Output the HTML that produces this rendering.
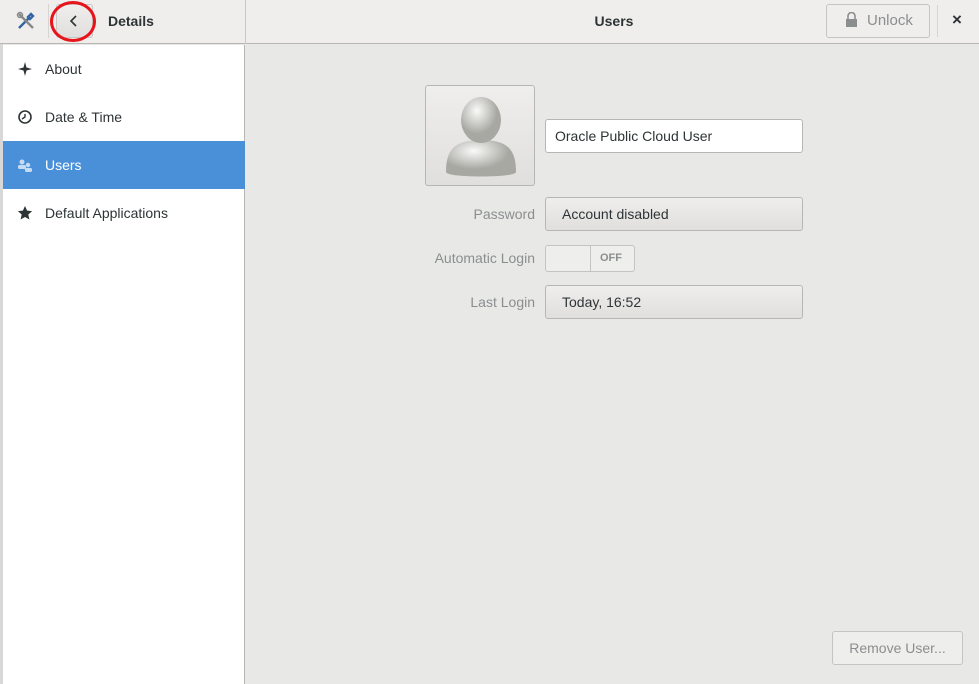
<!DOCTYPE html>
<html><head><style>
*{box-sizing:border-box;margin:0;padding:0}
body{width:979px;height:684px;overflow:hidden;font-family:"Liberation Sans","DejaVu Sans",sans-serif;font-size:14px;color:#2e3436;background:#e8e8e7;position:relative}
.abs{position:absolute}
.hdr{left:0;top:0;width:979px;height:44px;background:#efeeed;border-bottom:1px solid #b6b6b3}
.side{left:3px;top:45px;width:242px;height:639px;background:#fff;border-right:1px solid #b6b6b3}
.row{position:absolute;left:0;width:242px;height:48px;line-height:48px;padding-left:42px;font-size:14px}
.btn{border:1px solid #b6b6b3;border-radius:3px;background:linear-gradient(#efeeed,#e0dfdd);}
.lbl{color:#8b8e8f;text-align:right;width:200px;left:335px;font-size:14px}
</style></head><body>
<div class="abs" style="left:0;top:0;width:3px;height:684px;background:#d8d8d6"></div>
<div class="abs hdr"></div>
<div class="abs" style="left:245px;top:0;width:1px;height:44px;background:#c8c8c5"></div>
<div class="abs" style="left:48px;top:4px;width:1px;height:34px;background:#d5d5d2"></div>
<svg class="abs" style="left:16px;top:11px" width="20" height="20" viewBox="0 0 20 20"><path d="M3 17L13 7M15 3l2 2-3 3-2-2z" stroke="#3465a4" stroke-width="2.4" fill="none"/><path d="M3 3l14 14" stroke="#888" stroke-width="2.4"/><circle cx="4" cy="4" r="2.5" fill="none" stroke="#888" stroke-width="1.5"/></svg>
<div class="abs btn" style="left:56px;top:4px;width:37px;height:34px;border-color:#c8c8c5"></div>
<svg class="abs" style="left:68px;top:14px" width="12" height="14"><path d="M8 2L3 7l5 5" stroke="#2e3436" stroke-width="1.6" fill="none"/></svg>
<div class="abs" style="left:50px;top:1px;width:46px;height:41px;border:3px solid #e8141c;border-radius:50%"></div>
<div class="abs" style="left:108px;top:13px;font-weight:bold;font-size:14px">Details</div>
<div class="abs" style="left:246px;top:13px;width:736px;text-align:center;font-weight:bold">Users</div>
<div class="abs" style="left:826px;top:4px;width:104px;height:34px;border:1px solid #c4c4c1;border-radius:3px;background:#efeeed"></div>
<svg class="abs" style="left:845px;top:12px" width="14" height="16"><path d="M3 7V4a3.5 3.5 0 0 1 7 0v3" stroke="#8b8e8f" stroke-width="1.6" fill="none"/><rect x="1" y="7" width="11" height="8" fill="#8b8e8f"/></svg>
<div class="abs" style="left:867px;top:12px;color:#8b8e8f;font-size:15px">Unlock</div>
<div class="abs" style="left:937px;top:5px;width:1px;height:32px;background:#d5d5d2"></div>
<div class="abs" style="left:952px;top:10px;font-weight:bold;font-size:17px">×</div>
<div class="abs side">
<div class="row" style="top:0">About</div>
<div class="row" style="top:48px">Date &amp; Time</div>
<div class="row" style="top:96px;background:#4a90d9;color:#fff">Users</div>
<div class="row" style="top:144px">Default Applications</div>
</div>
<svg class="abs" style="left:17px;top:61px" width="16" height="16"><path d="M8 1L9.5 6.5 15 8 9.5 9.5 8 15 6.5 9.5 1 8 6.5 6.5z" fill="#2e3436"/></svg>
<svg class="abs" style="left:17px;top:109px" width="16" height="16"><circle cx="8" cy="8" r="6" stroke="#2e3436" stroke-width="1.6" fill="none"/><path d="M8 5v3l-3 2" stroke="#2e3436" stroke-width="1.4" fill="none"/></svg>
<svg class="abs" style="left:17px;top:157px" width="16" height="16"><circle cx="5" cy="5" r="2.5" fill="#c5dbf3"/><rect x="1" y="8" width="8" height="4" rx="1.5" fill="#c5dbf3"/><circle cx="11" cy="8" r="2.2" fill="#c5dbf3"/><rect x="8" y="11" width="7" height="4" rx="1.5" fill="#c5dbf3"/></svg>
<svg class="abs" style="left:17px;top:205px" width="16" height="16"><path d="M8 1l2.1 4.6 5 .5-3.8 3.4 1.1 5L8 12l-4.4 2.5 1.1-5L.9 6.1l5-.5z" fill="#2e3436"/></svg>
<div class="abs btn" style="left:425px;top:85px;width:110px;height:101px"></div>
<svg class="abs" style="left:440px;top:90px" width="82" height="92" viewBox="0 0 82 92"><defs><radialGradient id="g" cx="40%" cy="30%"><stop offset="0" stop-color="#fafaf8"/><stop offset="1" stop-color="#a8a8a3"/></radialGradient></defs><path d="M6 82c0-22 8-32 35-32s35 10 35 32c0 6-70 6-70 0z" fill="url(#g)"/><ellipse cx="41" cy="30" rx="20" ry="23" fill="url(#g)"/></svg>
<div class="abs" style="left:545px;top:119px;width:258px;height:34px;background:#fff;border:1px solid #b6b6b3;border-radius:3px;padding:8px 9px">Oracle Public Cloud User</div>
<div class="abs lbl" style="top:206px">Password</div>
<div class="abs btn" style="left:545px;top:197px;width:258px;height:34px;padding:8px 16px">Account disabled</div>
<div class="abs lbl" style="top:250px">Automatic Login</div>
<div class="abs" style="left:545px;top:245px;width:90px;height:27px;border:1px solid #c4c4c1;border-radius:3px;background:#eeeeec"></div>
<div class="abs" style="left:590px;top:245px;width:1px;height:27px;background:#c4c4c1"></div>
<div class="abs" style="left:600px;top:252px;font-size:11px;color:#8b8e8f;font-weight:bold">OFF</div>
<div class="abs lbl" style="top:294px">Last Login</div>
<div class="abs btn" style="left:545px;top:285px;width:258px;height:34px;padding:8px 16px">Today, 16:52</div>
<div class="abs" style="left:832px;top:631px;width:131px;height:34px;border:1px solid #c4c4c1;border-radius:3px;background:#eeeeec;color:#8b8e8f;text-align:center;line-height:32px">Remove User...</div>
</body></html>
